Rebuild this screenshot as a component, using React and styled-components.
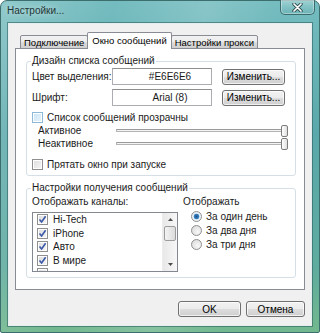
import styled, { createGlobalStyle } from "styled-components";

const GlobalStyle = createGlobalStyle`
  html, body { margin: 0; padding: 0; }
  body {
    width: 320px;
    height: 333px;
    overflow: hidden;
    font-family: "Liberation Sans", Arial, sans-serif;
    font-size: 10px;
    color: #1a1a1a;
  }
`;

const Window = styled.div`
  box-sizing: border-box;
  width: 320px;
  height: 333px;
  display: flex;
  flex-direction: column;
  padding-bottom: 6px;
  border: 1px solid #3d6e6e;
  border-radius: 7px 7px 2px 2px;
  background:
    linear-gradient(100deg, rgba(255,255,255,0.2) 0%, rgba(255,255,255,0) 30%, rgba(255,255,255,0.15) 55%, rgba(255,255,255,0) 75%),
    linear-gradient(180deg, #74bcbf 0%, #5aa8ab 40%, #5eab9f 80%, #72b88e 100%);
`;

const TitleBar = styled.div`
  height: 22px;
  display: flex;
  justify-content: space-between;
  align-items: flex-start;
  padding: 0 4px 0 6px;
`;

const Title = styled.span`
  margin-top: 4px;
  font-size: 10px;
  color: #1f3536;
  text-shadow: 0 0 6px rgba(255,255,255,0.7);
`;

const CloseButton = styled.div`
  width: 35px;
  height: 15px;
  margin-top: -1px;
  box-sizing: border-box;
  display: flex;
  align-items: center;
  justify-content: center;
  border: 1px solid #3b6c6e;
  border-top: none;
  border-radius: 0 0 5px 5px;
  background: linear-gradient(180deg, rgba(255,255,255,0.35), rgba(255,255,255,0.1) 50%, rgba(0,0,0,0.04));
  box-shadow: inset 0 0 0 1px rgba(255,255,255,0.35);
`;

const Client = styled.div`
  flex: 1;
  margin: 0 7px;
  display: flex;
  flex-direction: column;
  padding: 8px 6px 0 6px;
  background: #f0f0f0;
  border: 1px solid #e4eeee;
  box-shadow: 0 0 0 1px rgba(40, 90, 90, 0.55);
`;

const TabStrip = styled.div`
  height: 17px;
  display: flex;
  align-items: flex-end;
  padding-left: 5px;
  position: relative;
  z-index: 1;
`;

const Tab = styled.div`
  box-sizing: border-box;
  height: ${(p) => (p.$active ? "17px" : "14px")};
  padding: 0 ${(p) => (p.$active ? "4px" : "3px")};
  margin: 0 ${(p) => (p.$active ? "-1px" : "0")};
  display: flex;
  align-items: center;
  border: 1px solid #898c95;
  border-bottom: ${(p) => (p.$active ? "none" : "1px solid #898c95")};
  border-radius: 2px 2px 0 0;
  background: ${(p) =>
    p.$active ? "#ffffff" : "linear-gradient(180deg, #f2f2f2 0%, #ebebeb 50%, #dcdcdc 51%, #cfcfcf 100%)"};
  position: relative;
  z-index: ${(p) => (p.$active ? 2 : 1)};
  padding-bottom: ${(p) => (p.$active ? "2px" : "0")};
  white-space: nowrap;
  font-size: 9.5px;
  color: #000;
`;

const Panel = styled.div`
  height: 242px;
  box-sizing: border-box;
  margin-top: -1px;
  background: #ffffff;
  border: 1px solid #898c95;
  padding: 5px 8px 0 10px;
  display: flex;
  flex-direction: column;
  gap: 5px;
`;

const Group = styled.fieldset`
  margin: 0;
  padding: 0 5px ${(p) => p.$pb || 4}px 5px;
  border: 1px solid #d5dfe5;
  border-radius: 3px;
  min-width: 0;
`;

const Legend = styled.legend`
  padding: 0 1px;
  line-height: 14px;
  margin-left: -1px;
`;

const FieldRow = styled.div`
  display: flex;
  align-items: center;
  height: 17px;
  margin-top: ${(p) => p.$mt || 0}px;
`;

const FieldLabel = styled.span`
  width: 80px;
  white-space: nowrap;
`;

const TextBox = styled.div`
  box-sizing: border-box;
  width: 100px;
  height: 17px;
  border: 1px solid #abadb3;
  border-top-color: #8e8f8f;
  display: flex;
  align-items: center;
  justify-content: center;
  padding-left: 16px;
  background: #fff;
`;

const Button = styled.div`
  box-sizing: border-box;
  width: ${(p) => p.$w}px;
  height: 16px;
  margin-left: ${(p) => p.$ml || 0}px;
  display: flex;
  align-items: center;
  justify-content: center;
  border: 1px solid #707070;
  border-radius: 3px;
  background: linear-gradient(180deg, #f2f2f2 0%, #ebebeb 50%, #dddddd 51%, #cfcfcf 100%);
  box-shadow: inset 0 0 0 1px rgba(255,255,255,0.7);
  color: #000;
`;

const CheckRow = styled.div`
  display: flex;
  align-items: center;
  height: 13px;
  gap: 4px;
  margin-top: ${(p) => p.$mt || 0}px;
  white-space: nowrap;
`;

const Box = styled.span`
  box-sizing: border-box;
  width: 11px;
  height: 11px;
  flex: none;
  display: flex;
  align-items: center;
  justify-content: center;
  border: 1px solid ${(p) => (p.$hot ? "#8eb8d8" : "#8f8f8f")};
  background: ${(p) =>
    p.$hot
      ? "linear-gradient(135deg, #c9e3f5, #e8f4fc)"
      : "linear-gradient(135deg, #dcdcdc, #f6f6f6)"};
  box-shadow: inset 0 0 0 1px #ffffff;
`;

const SliderRow = styled.div`
  display: flex;
  align-items: center;
  height: 13px;
  padding-left: 6px;
`;

const SliderLabel = styled.span`
  width: 78px;
`;

const Track = styled.div`
  position: relative;
  width: 171px;
  height: 3px;
  box-sizing: border-box;
  border: 1px solid #b4b4b4;
  border-top-color: #9a9a9a;
  background: #f4f4f4;
`;

const Thumb = styled.span`
  position: absolute;
  right: -2px;
  top: -5px;
  width: 5px;
  height: 10px;
  border: 1px solid #7c7c7c;
  border-radius: 2px;
  background: linear-gradient(90deg, #ffffff, #e0e0e0);
`;

const Columns = styled.div`
  display: flex;
  gap: 5px;
`;

const Column = styled.div`
  display: flex;
  flex-direction: column;
`;

const Caption = styled.div`
  line-height: 13px;
  height: 13px;
  margin-bottom: ${(p) => p.$mb || 0}px;
`;

const ListBox = styled.div`
  box-sizing: border-box;
  width: 146px;
  height: 60px;
  border: 1px solid #828790;
  background: #fff;
  display: flex;
  overflow: hidden;
`;

const ListItems = styled.div`
  flex: 1;
  padding-left: 4px;
  display: flex;
  flex-direction: column;
`;

const ListItem = styled.div`
  display: flex;
  align-items: center;
  gap: 5px;
  height: 13.5px;
  flex: none;
`;

const ScrollBar = styled.div`
  width: 14px;
  display: flex;
  flex-direction: column;
  align-items: center;
  background: linear-gradient(90deg, #e8e8e8, #f7f7f7);
  border-left: 1px solid #ececec;
`;

const Arrow = styled.div`
  height: 13px;
  display: flex;
  align-items: center;
  justify-content: center;
`;

const ScrollSpace = styled.div`
  flex: 1;
`;

const ScrollThumb = styled.div`
  box-sizing: border-box;
  width: 12px;
  height: 15px;
  border: 1px solid #9c9c9c;
  border-radius: 2px;
  background: linear-gradient(90deg, #f3f3f3, #dcdcdc);
`;

const Radio = styled.span`
  box-sizing: border-box;
  width: 11px;
  height: 11px;
  flex: none;
  border-radius: 50%;
  border: 1px solid #8f8f8f;
  background: ${(p) =>
    p.$on
      ? "radial-gradient(circle, #1c4f8a 0, #3a86c4 2.5px, #e9f2f8 3.2px, #e9f2f8 100%)"
      : "radial-gradient(circle at 65% 65%, #f8f8f8, #d6d6d6)"};
`;

const RadioRow = styled.div`
  display: flex;
  align-items: center;
  gap: 4px;
  height: 14px;
  padding-left: 8px;
`;

const Footer = styled.div`
  display: flex;
  justify-content: flex-end;
  padding: 11px 0 0 0;
`;

const Check = ({ checked, hot }) => (
  <Box $hot={hot}>
    {checked && (
      <svg width="9" height="9" viewBox="0 0 9 9">
        <path d="M1.5 4.5 L3.6 7 L7.6 1.2" fill="none" stroke="#3a57a8" strokeWidth="1.6" />
      </svg>
    )}
  </Box>
);

// the fifth row is scrolled nearly out of view: only its box top shows
const channels = ["Hi-Tech", "iPhone", "Авто", "В мире", ""];
const periods = ["За один день", "За два дня", "За три дня"];

export default function App() {
  return (
    <>
      <GlobalStyle />
      <Window>
        <TitleBar>
          <Title>Настройки...</Title>
          <CloseButton>
            <svg width="11" height="9" viewBox="0 0 11 9">
              <path d="M2 1 L9 8 M9 1 L2 8" stroke="#2d4d4f" strokeWidth="3.4" strokeLinecap="round" />
              <path d="M2 1 L9 8 M9 1 L2 8" stroke="#ffffff" strokeWidth="1.7" strokeLinecap="round" />
            </svg>
          </CloseButton>
        </TitleBar>
        <Client>
          <TabStrip>
            <Tab>Подключение</Tab>
            <Tab $active>Окно сообщений</Tab>
            <Tab>Настройки прокси</Tab>
          </TabStrip>
          <Panel>
            <Group>
              <Legend>Дизайн списка сообщений</Legend>
              <FieldRow>
                <FieldLabel>Цвет выделения:</FieldLabel>
                <TextBox>#E6E6E6</TextBox>
                <Button $w={63} $ml={10}>Изменить...</Button>
              </FieldRow>
              <FieldRow $mt={4}>
                <FieldLabel>Шрифт:</FieldLabel>
                <TextBox>Arial (8)</TextBox>
                <Button $w={63} $ml={10}>Изменить...</Button>
              </FieldRow>
              <CheckRow $mt={5}>
                <Check hot />
                <span>Список сообщений прозрачны</span>
              </CheckRow>
              <SliderRow>
                <SliderLabel>Активное</SliderLabel>
                <Track><Thumb /></Track>
              </SliderRow>
              <SliderRow>
                <SliderLabel>Неактивное</SliderLabel>
                <Track><Thumb /></Track>
              </SliderRow>
              <CheckRow $mt={8}>
                <Check />
                <span>Прятать окно при запуске</span>
              </CheckRow>
            </Group>
            <Group $pb={5}>
              <Legend>Настройки получения сообщений</Legend>
              <Columns>
                <Column>
                  <Caption $mb={4}>Отображать каналы:</Caption>
                  <ListBox>
                    <ListItems>
                      {channels.map((c, i) => (
                        <ListItem key={i}>
                          <Check checked={c !== ""} />
                          {c && <span>{c}</span>}
                        </ListItem>
                      ))}
                    </ListItems>
                    <ScrollBar>
                      <Arrow>
                        <svg width="5" height="3" viewBox="0 0 5 3"><path d="M0 3 L2.5 0 L5 3 Z" fill="#4d4d4d" /></svg>
                      </Arrow>
                      <ScrollThumb />
                      <ScrollSpace />
                      <Arrow>
                        <svg width="5" height="3" viewBox="0 0 5 3"><path d="M0 0 L2.5 3 L5 0 Z" fill="#4d4d4d" /></svg>
                      </Arrow>
                    </ScrollBar>
                  </ListBox>
                </Column>
                <Column>
                  <Caption $mb={1}>Отображать</Caption>
                  {periods.map((p, i) => (
                    <RadioRow key={p}>
                      <Radio $on={i === 0} />
                      <span>{p}</span>
                    </RadioRow>
                  ))}
                </Column>
              </Columns>
            </Group>
          </Panel>
          <Footer>
            <Button $w={63}>OK</Button>
            <Button $w={59} $ml={5}>Отмена</Button>
          </Footer>
        </Client>
      </Window>
    </>
  );
}
